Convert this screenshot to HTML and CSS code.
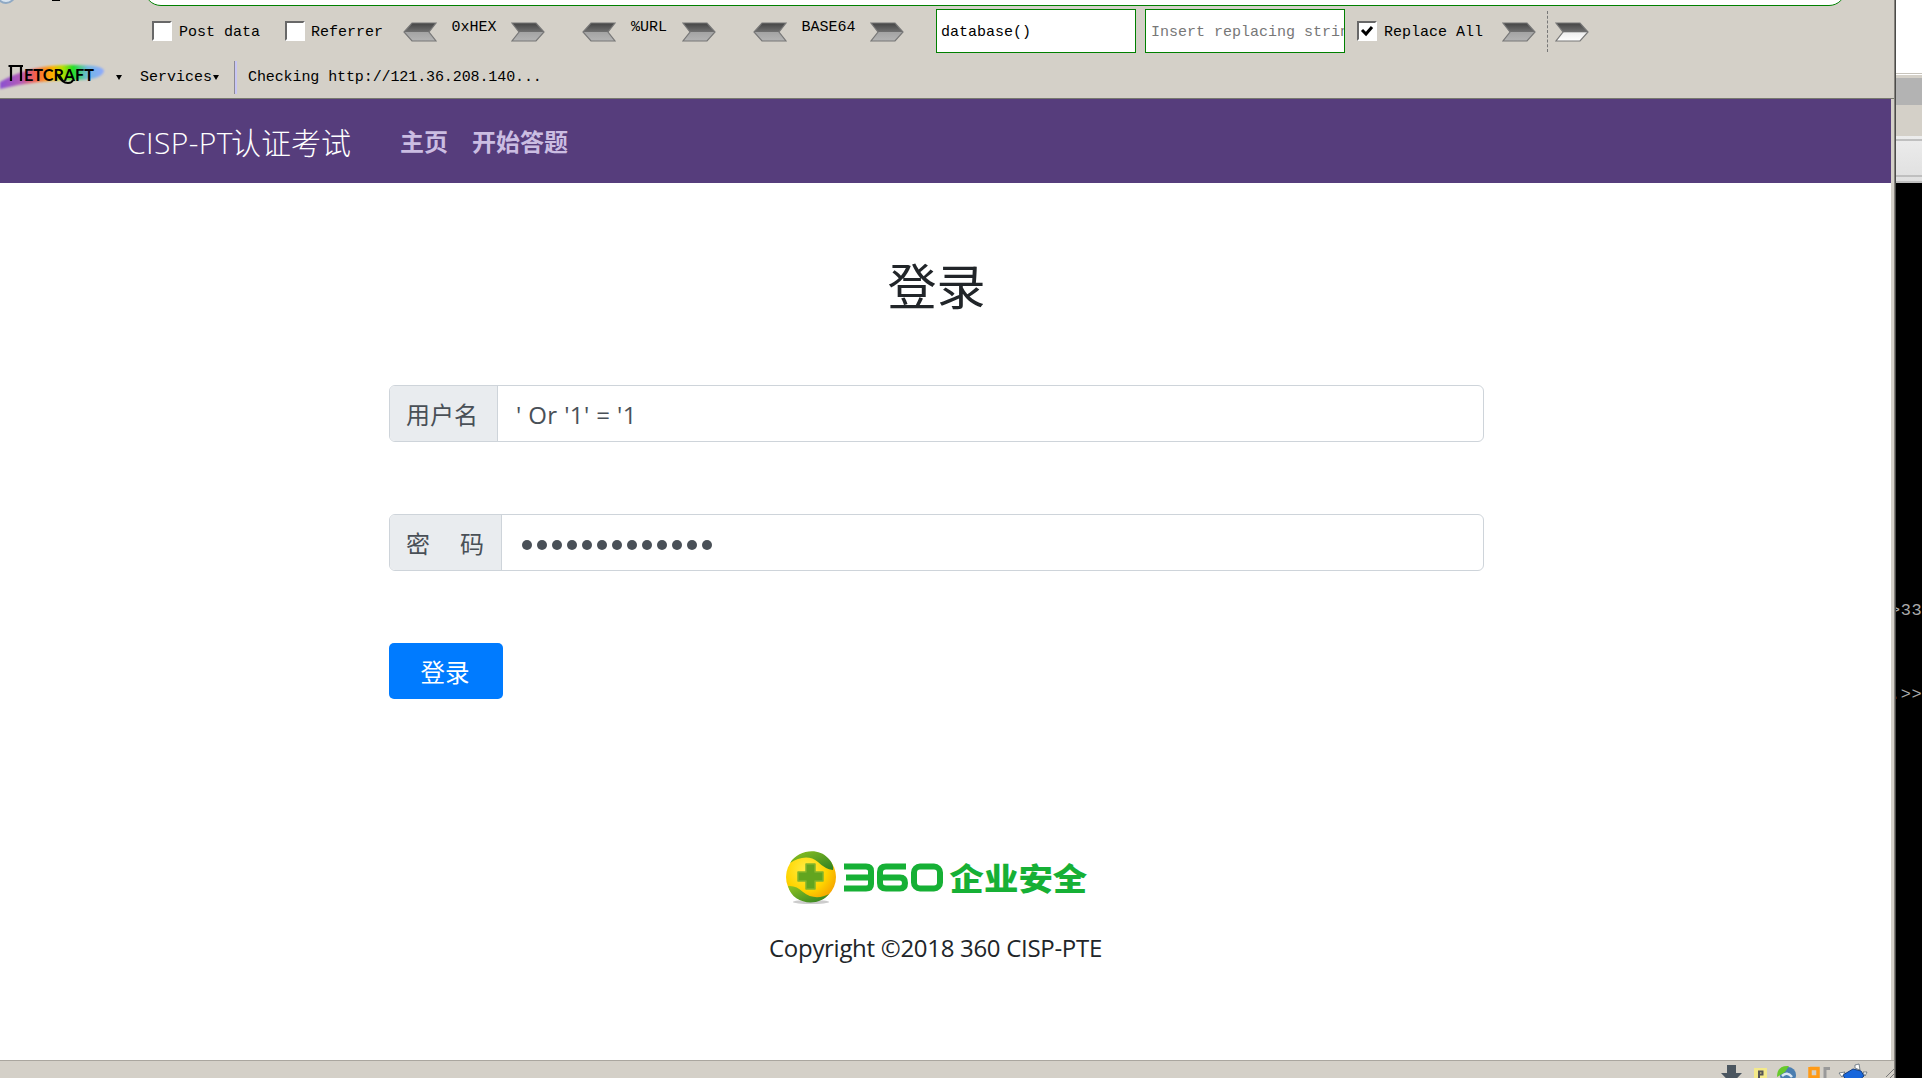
FILE: index.html
```html
<!DOCTYPE html>
<html lang="zh-CN">
<head>
<meta charset="utf-8">
<title>CISP-PT认证考试</title>
<link rel="stylesheet" href="styles.css">
</head>
<body>
<svg class="defs" width="0" height="0">
  <defs>
    <linearGradient id="dark" x1="0" y1="0" x2="0" y2="1"><stop offset="0" stop-color="#444"/><stop offset=".5" stop-color="#707070"/><stop offset=".52" stop-color="#a4a4a4"/><stop offset="1" stop-color="#b4b4b4"/></linearGradient>
    <linearGradient id="lite" x1="0" y1="0" x2="0" y2="1"><stop offset="0" stop-color="#444"/><stop offset=".5" stop-color="#707070"/><stop offset=".54" stop-color="#eee"/><stop offset="1" stop-color="#fff"/></linearGradient>
    <symbol id="right" viewBox="0 0 34 20"><path d="M1 1H25L33 10L25 19H1L8 10Z" stroke="#777" stroke-width="1.2"/></symbol>
    <symbol id="left" viewBox="0 0 34 20"><path d="M33 1H9L1 10L9 19H33L26 10Z" stroke="#777" stroke-width="1.2"/></symbol>
  </defs>
</svg>
<div class="window">
  <header class="toolbars">
    <div class="url-row">
      <svg class="url-bits" width="80" height="6"><circle cx="6" cy="-6" r="9" fill="#d9e5f0" stroke="#8fa9c4" stroke-width="2"/><path d="M52 0h8" stroke="#000" stroke-width="2"/></svg>
      <div class="url-box"></div>
    </div>
    <div class="hack-row">
      <i class="check"></i><span class="lbl post">Post data</span>
      <i class="check"></i><span class="lbl ref">Referrer</span>
      <svg class="arrow"><use href="#left"/></svg><span class="enc hex">0xHEX</span><svg class="arrow"><use href="#right"/></svg>
      <svg class="arrow gap-a"><use href="#left"/></svg><span class="enc url">%URL</span><svg class="arrow"><use href="#right"/></svg>
      <svg class="arrow gap-b"><use href="#left"/></svg><span class="enc b64">BASE64</span><svg class="arrow"><use href="#right"/></svg>
      <div class="field find">database()</div>
      <div class="field repl">Insert replacing string</div>
      <i class="check on"><svg width="16" height="16"><path d="M3 7L7 11L13 4" fill="none" stroke="#000" stroke-width="3"/></svg></i><span class="lbl all">Replace All</span>
      <svg class="arrow"><use href="#right"/></svg>
      <i class="dash"></i>
      <svg class="arrow white"><use href="#right"/></svg>
    </div>
    <div class="net-row">
      <svg class="netcraft" width="108" height="30">
        <defs><linearGradient id="rain"><stop offset="0" stop-color="#8a50d0"/><stop offset=".2" stop-color="#b35bb8"/><stop offset=".34" stop-color="#f5604a"/><stop offset=".5" stop-color="#ffb000"/><stop offset=".6" stop-color="#b8e000"/><stop offset=".7" stop-color="#22e022"/><stop offset=".84" stop-color="#70b8e0"/><stop offset="1" stop-color="#8fa8ff"/></linearGradient><filter id="soft"><feGaussianBlur stdDeviation="1"/></filter></defs>
        <path d="M0 20Q30 2 75 3Q104 3 104 9Q102 18 75 18Q35 18 0 27Z" fill="url(#rain)" filter="url(#soft)"/>
        <path d="M11 19V4H21V19M8.500 4H23" fill="none" stroke="#000" stroke-width="2.200"/>
        <text x="24" y="19" textLength="70" lengthAdjust="spacingAndGlyphs">ETCRAFT</text>
        <path d="M57 12Q62 21 68 21Q72 21 73 18" fill="none" stroke="#000" stroke-width="2"/>
      </svg>
      <i class="tri"></i><span class="lbl services">Services</span><i class="tri"></i>
      <i class="sep"></i><span class="lbl checking">Checking http://121.36.208.140...</span>
    </div>
  </header>
  <nav class="navbar">
    <a class="brand"><span class="latin">CISP-PT</span>认证考试</a>
    <a class="link">主页</a><a class="link">开始答题</a>
  </nav>
  <main class="page">
    <h1>登录</h1>
    <div class="group"><span class="addon user">用户名</span><div class="input name">' Or '1' = '1</div></div>
    <div class="group"><span class="addon pass"><span>密</span><span>码</span></span><div class="input dots"><i></i><i></i><i></i><i></i><i></i><i></i><i></i><i></i><i></i><i></i><i></i><i></i><i></i></div></div>
    <button class="submit">登录</button>
    <footer>
      <svg class="logo" width="306" height="58">
        <defs>
          <radialGradient id="ball" cx=".4" cy=".35" r=".7"><stop offset="0" stop-color="#ffee45"/><stop offset=".6" stop-color="#ffd400"/><stop offset="1" stop-color="#f5a000"/></radialGradient>
          <linearGradient id="leaf" x1="0" y1="0" x2="1" y2="1"><stop offset="0" stop-color="#91c51f"/><stop offset="1" stop-color="#2c7f24"/></linearGradient>
        </defs>
        <ellipse cx="27" cy="52" rx="18" ry="2" fill="#ccc"/>
        <circle cx="27" cy="27" r="25" fill="url(#ball)"/>
        <path d="M6 13C14 0 34-3 44 8Q50 14 49 20Q41 19 34 12C26 5 15 7 6 13Z" fill="url(#leaf)"/>
        <path d="M4 36Q12 35 19 42C27 49 38 48 45 44C34 58 8 54 4 36Z" fill="url(#leaf)"/>
        <path d="M22 14h9v8h8v9h-8v8h-9v-8h-8v-9h8z" fill="#62a51f" stroke="#83b52b" stroke-width="1.500" stroke-linejoin="round"/>
        <g fill="none" stroke="#16b035" stroke-width="6" stroke-linejoin="round"><path d="M60 16.500H82Q87 16.500 87 21V34Q87 38.500 82 38.500H60M62 27.500H87"/><path d="M122 16.500H102Q96 16.500 96 22V33Q96 38.500 102 38.500H116Q121 38.500 121 33Q121 27.500 116 27.500H97"/><rect x="130" y="16.500" width="26" height="22" rx="6"/></g>
        <text x="184" y="44" transform="scale(.9)" textLength="153" lengthAdjust="spacingAndGlyphs">企业安全</text>
      </svg>
      <p>Copyright ©2018 360 CISP-PTE</p>
    </footer>
  </main>
  <div class="status">
    <svg width="180" height="18">
      <path d="M11 5H20V13H26L15.500 24L5 13H11Z" fill="#4b5660"/>
      <rect x="38" y="8" width="13" height="12" fill="#f3e98a"/><path d="M43 18V11.500H46.500V14.500H43" fill="none" stroke="#555" stroke-width="2"/>
      <circle cx="72" cy="15" r="8" fill="#4b7eb0"/><path d="M61 17Q61 5 73 6L69 12Z" fill="#67c92c"/><path d="M66 16q5-5 10 1" fill="none" stroke="#dce8f2" stroke-width="2.500"/>
      <path d="M94 20V7M94 8.500H102V17H94" fill="none" stroke="#ff9a16" stroke-width="3.500"/><path d="M109 20V8.500H114" fill="none" stroke="#999" stroke-width="3"/>
      <path d="M127 15L137 9L145 11L148 16L141 22H131Z" fill="#1766dc" stroke="#123d83"/><path d="M123 13l6-1-3 5zM139 5l4-1 1 6-5-2zM147 12l4 0-2 4z" fill="#fff" stroke="#345" stroke-width=".6"/>
    </svg>
    <svg class="grip" width="8" height="10"><path d="M0 9L8 1M4 10L8 6" stroke="#777"/></svg>
  </div>
</div>
<div class="edge"></div>
<aside class="behind">
  <div class="b-white"></div><div class="b-edge"></div><div class="b-title"></div><div class="b-beige"></div><div class="b-bar"></div>
  <div class="term"><p>&gt;33</p><p>.&gt;&gt;</p></div>
</aside>
</body>
</html>
```
FILE: styles.css
```css
* { box-sizing: border-box; }
body { margin: 0; width: 1922px; height: 1078px; display: flex; overflow: hidden; background: #d4d0c8; font-family: "Open Sans", "Noto Sans CJK SC", sans-serif; color: #212529; }
i { display: block; flex: none; }
p { margin: 0; }
svg { flex: none; display: block; }
.defs { position: absolute; }
.window { width: 1894px; flex: none; display: flex; flex-direction: column; }
.edge { width: 2px; flex: none; background: #4b4b49; border-left: 1px solid #85827d; }

.toolbars { height: 99px; flex: none; background: #d4d0c8; border-bottom: 1px solid #77786f; font: 15px/18px "Liberation Mono", monospace; color: #000; }
.url-row { height: 6px; display: flex; overflow: hidden; align-items: flex-end; }
.url-box { width: 1702px; height: 34px; margin-left: 64px; flex: none; background: #fff; border: 1px solid #008000; border-radius: 17px; }
.hack-row { height: 50px; display: flex; align-items: center; padding-left: 152px; }
.lbl, .enc { white-space: pre; flex: none; }
.hack-row .lbl { padding-top: 4px; }
.check { width: 20px; height: 20px; background: #fff; border: 2px solid; border-color: #686868 #fff #fff #686868; }
.check.on { margin-left: 12px; }
.post { width: 113px; padding-left: 7px; }
.ref { width: 98px; padding-left: 6px; }
.all { width: 125px; padding-left: 7px; }
.arrow { width: 34px; height: 20px; fill: url(#dark); margin-top: 1px; }
.arrow.white { fill: url(#lite); margin-left: 7px; }
.gap-a, .gap-b { margin-left: 37px; }
.enc { text-align: center; margin-top: -6px; }
.hex { width: 74px; }
.url { width: 66px; }
.b64 { width: 83px; }
.field { width: 200px; height: 44px; flex: none; background: #fff; border: 1px solid #008000; padding-left: 4px; line-height: 45px; overflow: hidden; white-space: nowrap; }
.find { margin-left: 32px; }
.repl { margin-left: 9px; padding-left: 5px; color: #777; }
.dash { height: 41px; margin-left: 11px; border-left: 1px dashed #777; }
.net-row { height: 42px; display: flex; align-items: center; }
.net-row .lbl { padding-top: 2px; }
.netcraft text { font: bold 17px "Lato", sans-serif; fill: #000; }
.tri { width: 6px; border: 3px solid transparent; border-top: 5px solid #000; border-bottom: 0; }
.netcraft + .tri { margin-left: 8px; }
.services { margin-left: 18px; }
.services + .tri { margin-left: 1px; }
.sep { width: 3px; height: 33px; margin: 0 11px 0 15px; background: #c8c6f4; border-left: 1px solid #8d8994; }
.checking { letter-spacing: -.1px; }

.navbar { width: 1891px; height: 84px; flex: none; display: flex; align-items: center; padding: 2px 0 0 127px; background: #563d7c; }
.brand { width: 273px; font-size: 30px; font-weight: 300; color: #fff; white-space: nowrap; display: flex; align-items: center; line-height: 45px; }
.latin { width: 104px; font-size: 30px; letter-spacing: .4px; }
.link { margin-right: 24px; font-size: 24px; font-weight: 700; line-height: 36px; color: #cbbde2; }

.page { width: 1891px; height: 877px; flex: none; background: #fff; padding: 67px 407px 0 389px; display: flex; flex-direction: column; align-items: flex-start; }
h1 { width: 100%; margin: 0 0 63px; height: 72px; line-height: 72px; font-size: 49px; font-weight: 400; text-align: center; }
.group { width: 100%; height: 57px; margin-bottom: 72px; display: flex; flex: none; border: 1px solid #ced4da; border-radius: 6px; overflow: hidden; font-size: 24px; line-height: 57px; color: #495057; }
.addon { flex: none; background: #e9ecef; border-right: 1px solid #ced4da; padding: 0 17px 0 16px; display: flex; justify-content: space-between; }
.user { width: 108px; }
.pass { width: 112px; }
.input { padding-left: 18px; white-space: pre; }
.name { letter-spacing: .4px; }
.dots { display: flex; align-items: center; gap: 5px; padding: 4px 0 0 20px; }
.dots i { width: 10px; height: 10px; border-radius: 50%; background: #495057; }
.submit { width: 114px; height: 56px; flex: none; border: 0; border-radius: 5px; background: #007bff; color: #fff; font: 24.5px/57px "Noto Sans CJK SC", sans-serif; padding: 0 2px 0 0; }
footer { width: 100%; margin-top: 151px; display: flex; flex-direction: column; align-items: center; }
.logo text { font: 900 34px "Noto Sans CJK SC", sans-serif; fill: #16b035; }
footer p { margin: 22px 2px 0 0; font-size: 24px; line-height: 36px; letter-spacing: -.3px; white-space: nowrap; }

.status { height: 18px; flex: none; display: flex; border-top: 1px solid #aaa69f; background: #d4d0c8; padding-left: 1716px; align-items: flex-end; }
.grip { margin-left: -10px; }

.behind { width: 26px; flex: none; background: #000; overflow: hidden; }
.b-white { height: 75px; background: #fff linear-gradient(#c8c4bc, #c8c4bc) 0 73px / 100% 1px no-repeat; }
.b-edge { height: 3px; background: #d4d0c8; }
.b-title { height: 27px; background: #b3b3b3; }
.b-beige { height: 31px; background: #d4d0c8; }
.b-bar { height: 47px; background: linear-gradient(#bfbfbf, #bfbfbf) 0 3px / 100% 2px no-repeat, linear-gradient(#bfbfbf, #bfbfbf) 0 39px / 100% 2px no-repeat, linear-gradient(#bfbfbf, #bfbfbf) 0 45px / 100% 2px no-repeat, linear-gradient(#ececec, #dfdfdf); }
.term { padding-top: 417px; font: 17px/22px "Liberation Mono", monospace; color: #aaa; }
.term p { margin: 0 0 62px -6px; letter-spacing: .6px; white-space: nowrap; }
```
